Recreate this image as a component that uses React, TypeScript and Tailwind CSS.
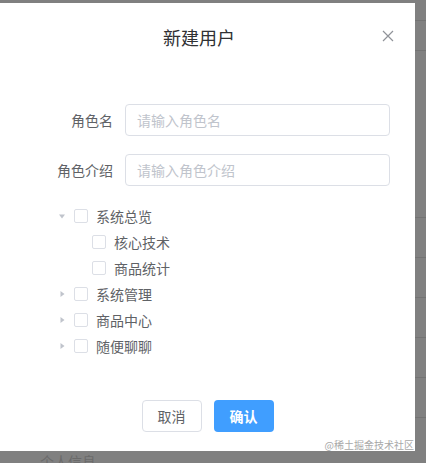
import React from "react";

const font = { fontFamily: '"Noto Sans CJK SC", "Noto Sans", sans-serif' };

function Caret({ open }: { open?: boolean }) {
  return (
    <span className="w-[24px] h-[26px] flex items-center justify-center">
      {open ? (
        <svg width="8" height="5" viewBox="0 0 8 5">
          <path d="M1 0.5 L7 0.5 L4 4.5 Z" fill="#c0c4cc" />
        </svg>
      ) : (
        <svg width="5" height="8" viewBox="0 0 5 8">
          <path d="M0.5 1 L0.5 7 L4.5 4 Z" fill="#c0c4cc" />
        </svg>
      )}
    </span>
  );
}

function Box() {
  return <span className="w-[14px] h-[14px] border border-[#dcdfe6] rounded-[2px] bg-white shrink-0" />;
}

function Node({ label, level, open, leaf }: { label: string; level: number; open?: boolean; leaf?: boolean }) {
  return (
    <div className="h-[26px] flex items-center" style={{ paddingLeft: 50 + level * 18 }}>
      {leaf ? <span className="w-[24px]" /> : <Caret open={open} />}
      <Box />
      <span className="ml-[8px] text-[14px] text-[#606266] leading-[26px]">{label}</span>
    </div>
  );
}

export default function App() {
  const lines = [20, 50, 217, 257, 297, 337, 377, 417];
  return (
    <div className="w-[426px] h-[463px] bg-[#808080] flex overflow-hidden" style={font}>
      <div className="w-[415px] flex flex-col">
        <div className="h-[3px]" />
        <div className="relative w-[415px] h-[448px] bg-white flex flex-col">
          <div className="pt-[22px] pr-[17px] text-center text-[18px] leading-[24px] text-[#303133]">新建用户</div>
          <svg className="absolute top-[27px] right-[21px]" width="12" height="12" viewBox="0 0 12 12">
            <path d="M1 1 L11 11 M11 1 L1 11" stroke="#909399" strokeWidth="1.2" />
          </svg>
          <div className="pt-[55px] flex flex-col">
            <div className="flex items-center h-[32px] mb-[18px]">
              <span className="w-[125px] pr-[12px] text-right text-[14px] text-[#606266]">角色名</span>
              <div className="w-[265px] h-[32px] border border-[#dcdfe6] rounded-[4px] pl-[11px] flex items-center text-[14px] text-[#c0c4cc]">
                请输入角色名
              </div>
            </div>
            <div className="flex items-center h-[32px] mb-[17px]">
              <span className="w-[125px] pr-[12px] text-right text-[14px] text-[#606266]">角色介绍</span>
              <div className="w-[265px] h-[32px] border border-[#dcdfe6] rounded-[4px] pl-[11px] flex items-center text-[14px] text-[#c0c4cc]">
                请输入角色介绍
              </div>
            </div>
            <div className="flex flex-col">
              <Node label="系统总览" level={0} open />
              <Node label="核心技术" level={1} leaf />
              <Node label="商品统计" level={1} leaf />
              <Node label="系统管理" level={0} />
              <Node label="商品中心" level={0} />
              <Node label="随便聊聊" level={0} />
            </div>
            <div className="pt-[41px] flex justify-center gap-[12px]">
              <button className="w-[60px] h-[32px] border border-[#dcdfe6] rounded-[4px] bg-white text-[14px] text-[#606266]">取消</button>
              <button className="w-[60px] h-[32px] rounded-[4px] bg-[#409eff] text-[14px] font-semibold text-white">确认</button>
            </div>
          </div>
          <span className="absolute right-[1px] bottom-[1px] text-[10px] leading-[11px] text-[#a8a8a8]">@稀土掘金技术社区</span>
        </div>
        <div className="flex-1 pl-[40px] overflow-hidden">
          <span className="block mt-[2px] text-[14px] leading-[16px] text-[#6a6a6a]">个人信息</span>
        </div>
      </div>
      <div className="flex-1 relative">
        {lines.map((y) => (
          <div key={y} className="absolute left-0 right-0 h-px bg-[#737373]" style={{ top: y }} />
        ))}
      </div>
    </div>
  );
}
